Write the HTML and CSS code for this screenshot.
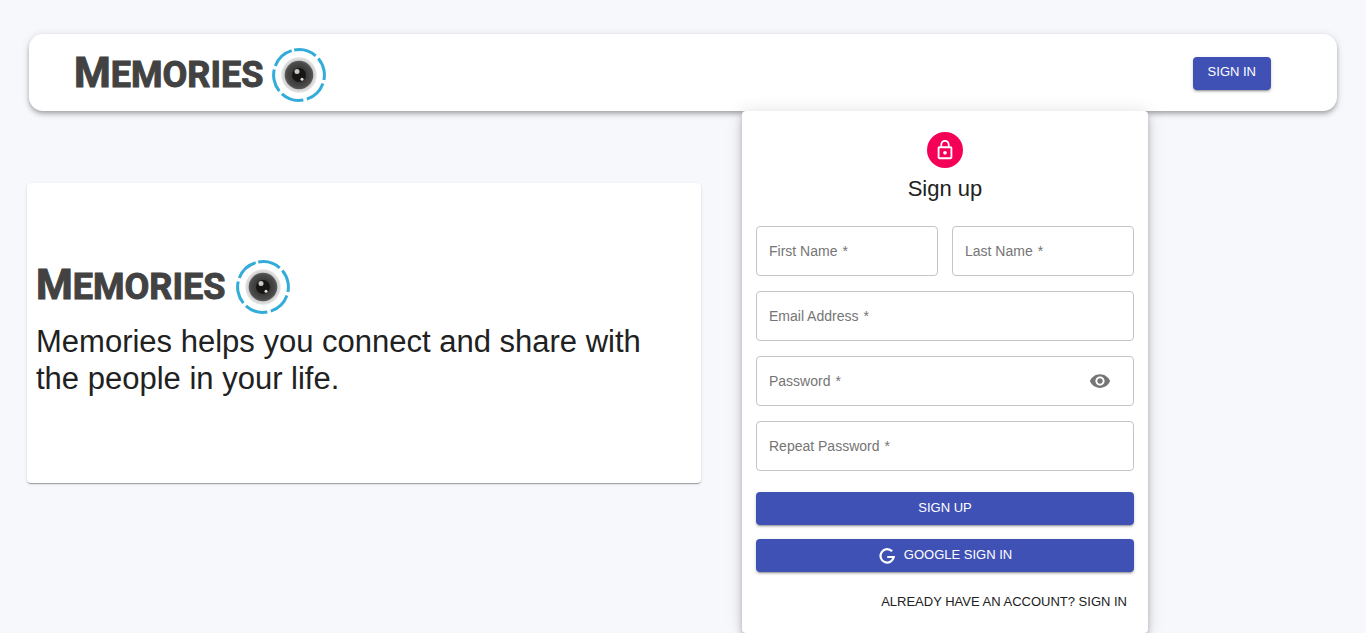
FILE: index.html
```html
<!DOCTYPE html>
<html lang="en">
<head>
<meta charset="utf-8">
<meta name="viewport" content="width=device-width, initial-scale=1">
<title>Memories</title>
<link rel="stylesheet" href="styles.css">
</head>
<body>
<svg class="defs" aria-hidden="true">
  <defs>
    <radialGradient id="halo">
      <stop offset="0.75" stop-color="#c9c7c7"/>
      <stop offset="1" stop-color="#e6e6e6"/>
    </radialGradient>
    <radialGradient id="glass">
      <stop offset="0.45" stop-color="#393837"/>
      <stop offset="0.85" stop-color="#4a4a4a"/>
      <stop offset="1" stop-color="#5e5d5d"/>
    </radialGradient>
    <symbol id="lens" viewBox="0 0 54 54">
      <circle cx="27" cy="27" r="25.4" fill="none" stroke="#33acd9" stroke-width="3" stroke-dasharray="22.9 3.7" transform="rotate(-101 27 27)"/>
      <circle cx="27" cy="27" r="17.8" fill="url(#halo)"/>
      <circle cx="27" cy="27" r="14.3" fill="url(#glass)"/>
      <circle cx="27" cy="27" r="7" fill="#171615"/>
      <circle cx="25" cy="23.4" r="2.5" fill="#c9c9c9"/>
      <circle cx="30" cy="31.2" r="1.5" fill="#dedede"/>
    </symbol>
  </defs>
</svg>
<div class="page">
  <header class="appbar">
    <a class="brand" href="#"><span class="wordmark"><span class="initial">M</span>EMORIES</span><svg class="lens" aria-hidden="true"><use href="#lens"/></svg></a>
    <button class="btn" type="button">SIGN IN</button>
  </header>
  <main class="content">
    <section class="intro">
      <div class="brand"><span class="wordmark"><span class="initial">M</span>EMORIES</span><svg class="lens" aria-hidden="true"><use href="#lens"/></svg></div>
      <h2 class="tagline">Memories helps you connect and share with the people in your life.</h2>
    </section>
    <section class="card">
      <div class="avatar">
        <svg width="22" height="22" viewBox="0 0 24 24" fill="#fff" aria-hidden="true"><path d="M12 17c1.100 0 2-.9 2-2s-.9-2-2-2-2 .9-2 2 .9 2 2 2zm6-9h-1V6c0-2.760-2.240-5-5-5S7 3.240 7 6v2H6c-1.100 0-2 .9-2 2v10c0 1.100.9 2 2 2h12c1.100 0 2-.9 2-2V10c0-1.100-.9-2-2-2zM8.900 6c0-1.710 1.390-3.100 3.100-3.100s3.100 1.390 3.100 3.100v2H8.900V6zM18 20H6V10h12v10z"/></svg>
      </div>
      <h1 class="title">Sign up</h1>
      <form class="form">
        <div class="fields">
          <div class="field"><input id="first" type="text" required><label for="first">First Name<span class="star">*</span></label></div>
          <div class="field"><input id="last" type="text" required><label for="last">Last Name<span class="star">*</span></label></div>
          <div class="field wide"><input id="email" type="email" required><label for="email">Email Address<span class="star">*</span></label></div>
          <div class="field wide"><input id="password" type="password" required><label for="password">Password<span class="star">*</span></label>
            <button class="reveal" type="button" aria-label="Show password"><svg width="22" height="22" viewBox="0 0 24 24" fill="#757575" aria-hidden="true"><path d="M12 4.500C7 4.500 2.730 7.610 1 12c1.730 4.390 6 7.500 11 7.500s9.270-3.110 11-7.500c-1.730-4.390-6-7.500-11-7.500zM12 17c-2.760 0-5-2.240-5-5s2.240-5 5-5 5 2.240 5 5-2.240 5-5 5zm0-8c-1.660 0-3 1.340-3 3s1.340 3 3 3 3-1.340 3-3-1.340-3-3-3z"/></svg></button>
          </div>
          <div class="field wide"><input id="repeat" type="password" required><label for="repeat">Repeat Password<span class="star">*</span></label></div>
        </div>
        <button class="btn" type="submit">SIGN UP</button>
        <button class="btn" type="button"><svg class="google" width="18" height="18" viewBox="0 0 24 24" aria-hidden="true"><path d="M18.800 5.800A8.900 8.900 0 1 0 21 13.300H12.300" fill="none" stroke="#fff" stroke-width="2.900"/></svg>GOOGLE SIGN IN</button>
        <a class="switch" href="#">ALREADY HAVE AN ACCOUNT? SIGN IN</a>
      </form>
    </section>
  </main>
</div>
</body>
</html>
```
FILE: styles.css
```css
* { box-sizing: border-box; }
body {
  margin: 0;
  background: #f6f8fc;
  color: #212121;
  font-family: "Liberation Sans", Arial, sans-serif;
}
.defs { position: absolute; width: 0; height: 0; }
.page { padding: 34px 27px 0; }

.appbar {
  display: flex;
  align-items: center;
  justify-content: space-between;
  margin: 0 2px;
  padding: 10px 66px 9px 45px;
  background: #fff;
  border-radius: 14px;
  box-shadow: 0 2px 4px -1px rgba(0,0,0,.2), 0 4px 5px rgba(0,0,0,.14), 0 1px 9px rgba(0,0,0,.12);
}
.brand {
  display: flex;
  align-items: center;
  gap: 11px;
  color: #424242;
  text-decoration: none;
}
.appbar .brand { gap: 9px; padding-top: 4px; }
.wordmark {
  font-family: "Liberation Sans Narrow", Roboto, sans-serif;
  font-weight: 700;
  font-size: 36px;
  line-height: 52px;
  -webkit-text-stroke: 1px #424242;
}
.initial { font-size: 42px; line-height: 42px; }
.lens { width: 54px; height: 54px; }

.btn {
  display: flex;
  align-items: center;
  justify-content: center;
  min-height: 33px;
  padding: 0 15px 2px;
  border: 0;
  border-radius: 4px;
  background: #3f51b5;
  color: #fff;
  font: 500 13px/20px "Liberation Sans", Arial, sans-serif;
  box-shadow: 0 3px 1px -2px rgba(0,0,0,.2), 0 2px 2px rgba(0,0,0,.14), 0 1px 4px rgba(0,0,0,.12);
}

.content {
  display: grid;
  grid-template-columns: 674fr 406fr;
  column-gap: 41px;
  align-items: start;
  padding-right: 191px;
}
.intro {
  margin-top: 72px;
  padding: 77px 9px 86px;
  background: #fff;
  border-radius: 4px;
  box-shadow: 0 2px 1px -1px rgba(0,0,0,.2), 0 1px 1px rgba(0,0,0,.14), 0 1px 3px rgba(0,0,0,.12);
}
.tagline {
  margin: 9px 0 0;
  font-size: 31px;
  font-weight: 400;
  line-height: 37px;
}

.card {
  display: flex;
  flex-direction: column;
  align-items: center;
  padding: 21px 14px 15px;
  background: #fff;
  border-radius: 4px;
  box-shadow: 0 3px 5px -1px rgba(0,0,0,.2), 0 6px 10px rgba(0,0,0,.14), 0 1px 18px rgba(0,0,0,.12);
}
.avatar {
  display: grid;
  place-items: center;
  width: 36px;
  height: 36px;
  border-radius: 50%;
  background: #f50057;
}
.title {
  margin: 6px 0 23px;
  font-size: 22px;
  font-weight: 400;
  line-height: 29px;
}
.form {
  display: flex;
  flex-direction: column;
  gap: 14px;
  width: 100%;
}
.fields {
  display: grid;
  grid-template-columns: 1fr 1fr;
  gap: 15px 14px;
  margin-bottom: 7px;
}
.wide { grid-column: span 2; }
.field { position: relative; }
.field input {
  display: block;
  width: 100%;
  height: 50px;
  padding: 0 13px;
  border: 1px solid #c4c4c4;
  border-radius: 4px;
  background: #fff;
  font: 14px "Liberation Sans", Arial, sans-serif;
}
.field label {
  position: absolute;
  left: 13px;
  top: 15px;
  color: #757575;
  font-size: 14px;
  line-height: 20px;
  pointer-events: none;
}
.star { margin-left: 5px; }
.field input:focus + label, .field input:valid + label { top: -10px; background: #fff; }
.reveal {
  position: absolute;
  right: 13px;
  top: 4px;
  display: grid;
  place-items: center;
  width: 42px;
  height: 42px;
  padding: 0;
  border: 0;
  background: none;
}
.google { margin: 2px 8px 0 0; }
.switch {
  align-self: flex-end;
  padding: 6px 7px;
  color: #212121;
  font-size: 13px;
  line-height: 20px;
  text-decoration: none;
}
```
